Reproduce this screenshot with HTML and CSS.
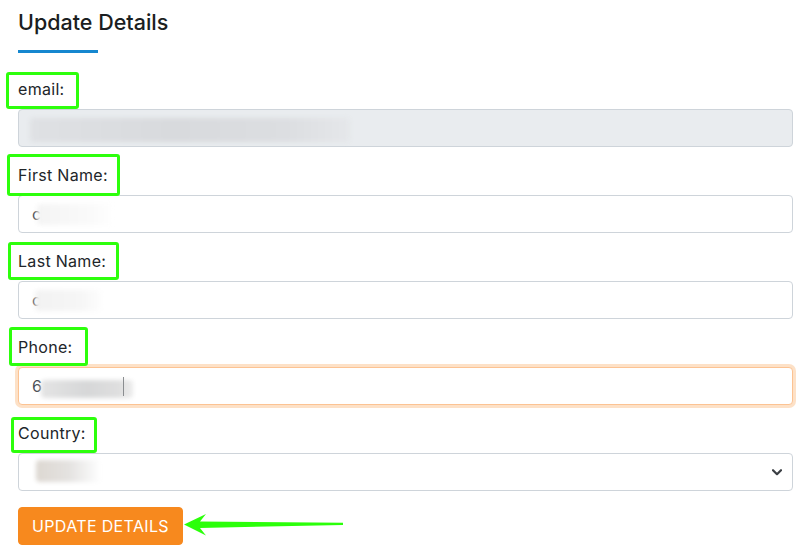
FILE: index.html
```html
<!DOCTYPE html>
<html lang="en">
<head>
<meta charset="utf-8">
<title>Update Details</title>
<link rel="stylesheet" href="styles.css">
</head>
<body>
<main class="panel">
  <h4 class="title">Update Details</h4>
  <div class="title-rule"></div>

  <form class="form">
    <div class="group">
      <label class="label mark-email" for="email">email:</label>
      <div class="field">
        <input id="email" class="control control-readonly" type="text" readonly value="">
        <span class="redact redact-email"></span>
      </div>
    </div>

    <div class="group">
      <label class="label mark-first" for="first">First Name:</label>
      <div class="field">
        <input id="first" class="control" type="text" value="c">
        <span class="redact redact-first"></span>
      </div>
    </div>

    <div class="group">
      <label class="label mark-last" for="last">Last Name:</label>
      <div class="field">
        <input id="last" class="control" type="text" value="c">
        <span class="redact redact-last"></span>
      </div>
    </div>

    <div class="group">
      <label class="label mark-phone" for="phone">Phone:</label>
      <div class="field">
        <input id="phone" class="control control-focus" type="text" value="6">
        <span class="redact redact-phone"></span>
        <span class="caret"></span>
      </div>
    </div>

    <div class="group">
      <label class="label mark-country" for="country">Country:</label>
      <div class="field">
        <select id="country" class="control control-select">
          <option></option>
        </select>
        <svg class="chevron" width="10" height="7" viewBox="0 0 10 7"><path d="M1 1.2 L5 5.2 L9 1.2" fill="none" stroke="#3b3f44" stroke-width="2.2" stroke-linecap="round" stroke-linejoin="round"/></svg>
        <span class="redact redact-country"></span>
      </div>
    </div>

    <div class="actions">
      <button type="button" class="btn">UPDATE DETAILS</button>
      <svg class="pointer" width="162" height="24" viewBox="0 0 162 24">
        <polygon points="1,11.5 23,1 17,8.5 160,9.8 160,12 17,15 23,22.5" fill="#2bff0a"/>
      </svg>
    </div>
  </form>
</main>
</body>
</html>
```

FILE: styles.css
```css
*,
*::before,
*::after {
  box-sizing: border-box;
}

body {
  margin: 0;
  background: #ffffff;
  color: #212529;
  font-family: Inter, "Open Sans", "DejaVu Sans", sans-serif;
}

.panel {
  padding: 10px 12px 0 18px;
}

.title {
  margin: 0;
  font-size: 21.5px;
  font-weight: 500;
  line-height: 25px;
  color: #1b1e21;
}

.title-rule {
  width: 80px;
  height: 3px;
  margin-top: 15px;
  background: #1587cf;
}

.form {
  margin-top: 24px;
}

.group {
  margin-bottom: 16px;
}

.label {
  position: relative;
  display: inline-block;
  margin-bottom: 8px;
  font-size: 16px;
  line-height: 24px;
  letter-spacing: 0.3px;
}

.label::after {
  content: "";
  position: absolute;
  border: 3px solid #2dff0c;
  border-radius: 3px;
  z-index: 2;
}

.mark-email::after { left: -12px; top: -5px; width: 73px; height: 37px; }
.mark-first::after { left: -11px; top: -9px; width: 113px; height: 42px; }
.mark-last::after { left: -10px; top: -7px; width: 111px; height: 38px; }
.mark-phone::after { left: -9px; top: -8px; width: 79px; height: 39px; }
.mark-country::after { left: -7px; top: -4px; width: 86px; height: 36px; }

.field {
  position: relative;
}

.control {
  display: block;
  width: 100%;
  height: 38px;
  padding: 6px 13px;
  font-family: inherit;
  font-size: 16px;
  color: #495057;
  background: #ffffff;
  border: 1px solid #ced4da;
  border-radius: 4px;
  outline: none;
}

.control-readonly {
  background: #e9ecef;
}

.control-focus {
  border-color: #fcc393;
  box-shadow: 0 0 0 3px rgba(247, 137, 31, 0.25);
}

.control-select {
  appearance: none;
  -webkit-appearance: none;
}

.chevron {
  position: absolute;
  right: 11px;
  top: 16px;
}

.redact {
  position: absolute;
  border-radius: 4px;
  filter: blur(2px);
  pointer-events: none;
}

.redact-email {
  left: 12px;
  top: 9px;
  width: 320px;
  height: 24px;
  background: linear-gradient(90deg, #dfe1e4 0%, #d8dadd 45%, #dcdee1 80%, #e5e7ea 100%);
}

.redact-first {
  left: 19px;
  top: 9px;
  width: 78px;
  height: 21px;
  background: linear-gradient(90deg, #f4f4f4, #fafafa 70%, #ffffff);
}

.redact-last {
  left: 17px;
  top: 9px;
  width: 66px;
  height: 21px;
  background: linear-gradient(90deg, #f2f2f2, #f6f6f6 70%, #fdfdfd);
}

.redact-phone {
  left: 23px;
  top: 13px;
  width: 92px;
  height: 18px;
  background: linear-gradient(90deg, #e4e4e4, #d6d7d8 50%, #dfdfdf 85%, #ececec);
}

.caret {
  position: absolute;
  left: 105px;
  top: 10px;
  width: 1px;
  height: 19px;
  background: #8a8d90;
}

.redact-country {
  left: 18px;
  top: 7px;
  width: 65px;
  height: 22px;
  background: linear-gradient(90deg, #ddd8d2, #e4e2e0 50%, #f6f6f6 85%, #ffffff);
}

.actions {
  display: flex;
  align-items: center;
}

.btn {
  height: 38px;
  padding: 0 13px;
  font-family: inherit;
  font-size: 16px;
  color: #ffffff;
  background: #f7891e;
  border: 1px solid #f7891e;
  border-radius: 4px;
  letter-spacing: 0.35px;
}

.pointer {
  display: block;
  margin-top: -2px;
}
```
